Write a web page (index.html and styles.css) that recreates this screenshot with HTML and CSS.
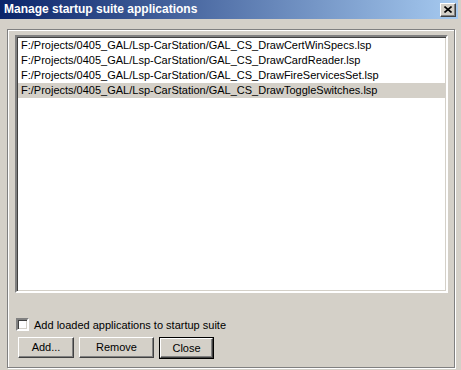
FILE: index.html
```html
<!DOCTYPE html>
<html lang="en">
<head>
    <meta charset="UTF-8">
    <title>Manage startup suite applications</title>
    <link rel="stylesheet" href="styles.css">
</head>
<body>
    <div class="window">
        <!-- Title bar -->
        <div class="titlebar">
            <span class="title">Manage startup suite applications</span>
            <div class="close-box">
                <svg width="8" height="7" viewBox="0 0 8 7">
                    <path d="M0.5 0.5 L7.5 6.5 M7.5 0.5 L0.5 6.5" stroke="#000" stroke-width="1.6" fill="none"/>
                </svg>
            </div>
        </div>

        <!-- Dialog body -->
        <div class="panel">
            <div class="listbox">
                <div class="row">F:/Projects/0405_GAL/Lsp-CarStation/GAL_CS_DrawCertWinSpecs.lsp</div>
                <div class="row">F:/Projects/0405_GAL/Lsp-CarStation/GAL_CS_DrawCardReader.lsp</div>
                <div class="row">F:/Projects/0405_GAL/Lsp-CarStation/GAL_CS_DrawFireServicesSet.lsp</div>
                <div class="row selected">F:/Projects/0405_GAL/Lsp-CarStation/GAL_CS_DrawToggleSwitches.lsp</div>
            </div>

            <label class="check-row">
                <span class="checkbox"></span>
                <span>Add loaded applications to startup suite</span>
            </label>

            <div class="buttons">
                <div class="btn btn-add">Add...</div>
                <div class="btn btn-remove">Remove</div>
                <div class="btn-default"><div class="btn btn-close">Close</div></div>
            </div>
        </div>
    </div>
</body>
</html>
```

FILE: styles.css
```css
/* General Styling */
body {
    margin: 0;
    padding: 0;
    background-color: #d4d0c8;
    font-family: "Liberation Sans", Arial, sans-serif;
    font-size: 11px;
    color: #000;
}

.window {
    width: 461px;
    height: 370px;
    display: flex;
    flex-direction: column;
    overflow: hidden;
}

/* Title bar */
.titlebar {
    height: 19px;
    margin-right: 3px;
    display: flex;
    align-items: center;
    justify-content: space-between;
    padding-left: 4px;
    padding-right: 2px;
    background: linear-gradient(to right, #0a246a, #a6caf0);
}

.title {
    color: #fff;
    font-weight: bold;
    font-size: 12px;
    line-height: 19px;
}

.close-box {
    width: 14px;
    height: 12px;
    display: flex;
    align-items: center;
    justify-content: center;
    background: #d4d0c8;
    border: 1px solid;
    border-color: #fff #404040 #404040 #fff;
    box-shadow: inset -1px -1px #808080;
}

.close-box svg {
    display: block;
    margin-top: -1px;
}

/* Dialog body */
.panel {
    margin: 10px 6px 2px 7px;
    flex: 1;
    display: flex;
    flex-direction: column;
    padding: 5px 6px 0 7px;
    border: 1px solid #808080;
    box-shadow: inset 1px 1px #fff, 1px 1px #fff;
}

.listbox {
    height: 252px;
    background: #fff;
    border: 2px solid;
    border-color: #808080 #fff #fff #808080;
    box-shadow: inset 1px 1px #404040, inset -1px -1px #d4d0c8;
    padding: 1px 0;
}

.row {
    height: 15px;
    line-height: 15px;
    padding-left: 3px;
    margin: 0 1px;
    white-space: nowrap;
}

.row.selected {
    background-color: #d4d0c8;
}

.check-row {
    display: flex;
    align-items: center;
    gap: 5px;
    margin-top: 25px;
    margin-left: 1px;
    height: 13px;
}

.checkbox {
    width: 9px;
    height: 9px;
    background: #fff;
    border: 2px solid;
    border-color: #808080 #fff #fff #808080;
    box-shadow: inset 1px 1px #404040, inset -1px -1px #d4d0c8;
}

.buttons {
    display: flex;
    gap: 5px;
    margin-top: 6px;
    margin-left: 3px;
}

.btn {
    height: 19px;
    line-height: 19px;
    text-align: center;
    background: #d4d0c8;
    border: 1px solid;
    border-color: #fff #404040 #404040 #fff;
    box-shadow: inset -1px -1px #808080;
}

.btn-add {
    width: 54px;
}

.btn-remove {
    width: 73px;
}

.btn-default {
    border: 1px solid #000;
}

.btn-close {
    width: 51px;
    height: 18px;
    line-height: 18px;
}
```
